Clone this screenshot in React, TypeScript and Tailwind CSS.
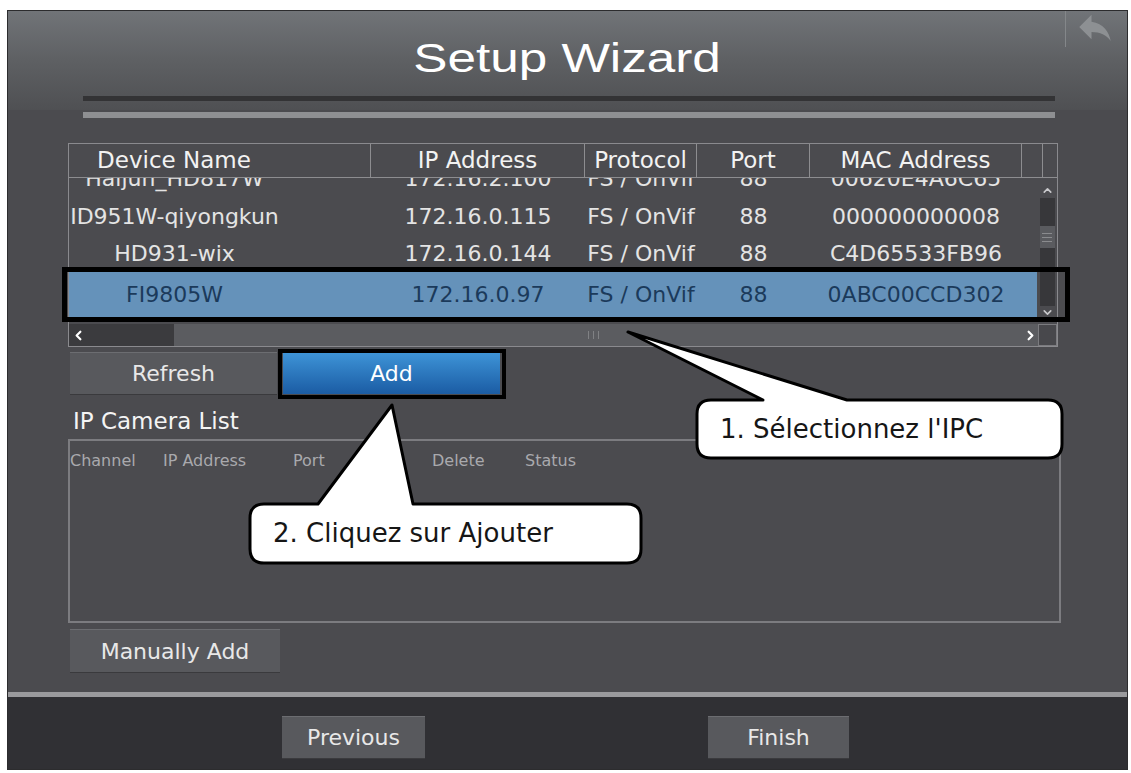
import { ChevronDown, ChevronLeft, ChevronRight, ChevronUp } from "lucide-react";

const devices = [
  ["Haijun_HD817W", "172.16.2.100", "FS / OnVif", "88", "00620E4A6C65"],
  ["ID951W-qiyongkun", "172.16.0.115", "FS / OnVif", "88", "000000000008"],
  ["HD931-wix", "172.16.0.144", "FS / OnVif", "88", "C4D65533FB96"],
  ["FI9805W", "172.16.0.97", "FS / OnVif", "88", "0ABC00CCD302"],
];

const rowHeights = ["h-[38px]", "h-[38px]", "h-[36px]", "h-[46px]"];

function GrayButton({ label, className }: { label: string; className: string }) {
  return (
    <div
      className={
        "flex items-center justify-center border-t border-[#6c6d71] bg-[#58595d] text-[22px] text-[#e8e8e8] shadow-[0_1px_0_#3a3a3d] " +
        className
      }
    >
      {label}
    </div>
  );
}

export default function App() {
  return (
    <div className="relative h-[773px] w-[1131px] overflow-hidden bg-white font-['DejaVu_Sans',Verdana,sans-serif]">
      {/* screen */}
      <div className="ml-[7px] mt-[10px] flex h-[760px] w-[1121px] flex-col border border-[#2c2c2e] bg-[#4b4b4f]">
        {/* header */}
        <div className="relative h-[99px] bg-linear-to-b from-[#717478] via-[#5e6063] to-[#4f5053]">
          <div className="h-[85px] pt-[27px] text-center">
            <span className="inline-block scale-x-[1.25] font-['Liberation_Sans',Arial,sans-serif] text-[41px] leading-[41px] text-white">
              Setup Wizard
            </span>
          </div>
          <div className="ml-[75px] mr-[72px] h-[5px] bg-[#333335]" />
          <div className="absolute left-[1057px] top-0 h-[36px] w-px bg-[#84878a]" />
          <svg className="absolute left-[1068px] top-[2px]" width="38" height="28" viewBox="2 4 20 16">
            <path d="M10 9V5l-7 7 7 7v-4.1c5 0 8.5 1.6 11 5.1-1-5-4-10-11-11z" fill="#8d9093" />
          </svg>
        </div>

        <div className="flex flex-1 flex-col">
          <div className="ml-[75px] mr-[72px] mt-[2px] h-[6px] bg-[#8e8f92]" />

          {/* device table */}
          <div className="ml-[60px] mt-[25px] w-[990px] border border-[#8a8a8e]">
            <div className="flex h-[34px] border-b border-[#8d8d90] text-[23px] text-[#f2f2f2]">
              <div className="flex w-[302px] items-center justify-center border-r border-[#8d8d90] pr-[91px] whitespace-nowrap">
                Device Name
              </div>
              <div className="flex w-[214px] items-center justify-center border-r border-[#8d8d90] whitespace-nowrap">
                IP Address
              </div>
              <div className="flex w-[112px] items-center justify-center border-r border-[#8d8d90] whitespace-nowrap">
                Protocol
              </div>
              <div className="flex w-[113px] items-center justify-center border-r border-[#8d8d90]">Port</div>
              <div className="flex w-[212px] items-center justify-center border-r border-[#8d8d90] whitespace-nowrap">
                MAC Address
              </div>
              <div className="w-[21px] border-r border-[#8d8d90]" />
              <div className="flex-1" />
            </div>

            <div className="flex h-[146px] overflow-hidden">
              <div className="-mt-[19px] w-[968px]">
                {devices.map((d, i) => {
                  const selected = i === devices.length - 1;
                  return (
                    <div
                      key={d[0]}
                      className={
                        "flex items-center whitespace-nowrap text-[22px] " +
                        rowHeights[i] +
                        (selected ? " bg-[#6592ba] text-[#1b3a5b]" : " text-[#e4e4e4]")
                      }
                    >
                      <div className="w-[302px] pr-[91px] text-center">{d[0]}</div>
                      <div className="w-[214px] text-center">{d[1]}</div>
                      <div className="w-[112px] text-center">{d[2]}</div>
                      <div className="w-[113px] text-center">{d[3]}</div>
                      <div className="w-[212px] text-center">{d[4]}</div>
                    </div>
                  );
                })}
              </div>
              <div className="flex w-[20px] flex-col items-center pt-[6px]">
                <ChevronUp size={13} strokeWidth={3} className="text-[#c9c9cc]" />
                <div className="mt-[1px] flex h-[108px] w-[15px] flex-col items-center bg-[#37373a]">
                  <div className="mt-[28px] flex h-[22px] w-[15px] flex-col items-center justify-center gap-[3px] bg-[#5a5b5f]">
                    <div className="h-px w-[10px] bg-[#8a8b8e]" />
                    <div className="h-px w-[10px] bg-[#8a8b8e]" />
                    <div className="h-px w-[10px] bg-[#8a8b8e]" />
                  </div>
                </div>
                <ChevronDown size={13} strokeWidth={3} className="text-[#c9c9cc]" />
              </div>
            </div>

            {/* horizontal scrollbar */}
            <div className="flex h-[22px]">
              <div className="flex w-[105px] items-center bg-[#3b3b3e] pl-[2px]">
                <ChevronLeft size={15} strokeWidth={3.5} className="text-white" />
              </div>
              <div className="flex flex-1 items-center bg-[#5b5c60]">
                <div className="ml-[414px] flex gap-[4px]">
                  <div className="h-[8px] w-px bg-[#808184]" />
                  <div className="h-[8px] w-px bg-[#808184]" />
                  <div className="h-[8px] w-px bg-[#808184]" />
                </div>
              </div>
              <div className="flex w-[16px] items-center justify-center bg-[#5b5c60]">
                <ChevronRight size={15} strokeWidth={3.5} className="text-white" />
              </div>
              <div className="w-[19px] border border-[#7b7b7f] bg-[#48484c]" />
            </div>
          </div>

          {/* action buttons */}
          <div className="ml-[62px] mt-[5px] flex">
            <GrayButton label="Refresh" className="h-[42px] w-[207px]" />
            <div className="ml-[6px] flex h-[42px] w-[217px] items-center justify-center bg-linear-to-b from-[#3f95d8] to-[#1b5ca4] text-[22px] text-white">
              Add
            </div>
          </div>

          <div className="ml-[65px] mt-[13px] h-[28px] text-[23px] leading-[28px] text-[#f4f4f4]">IP Camera List</div>

          {/* camera list */}
          <div className="ml-[60px] mt-[4px] h-[184px] w-[993px] border-2 border-[#7c7c80]">
            <div className="flex pt-[10px] text-[16px] leading-[20px] text-[#a9a9ad]">
              <span className="w-[93px]">Channel</span>
              <span className="w-[130px]">IP Address</span>
              <span className="w-[139px]">Port</span>
              <span className="w-[93px]">Delete</span>
              <span>Status</span>
            </div>
          </div>

          <GrayButton label="Manually Add" className="ml-[62px] mt-[6px] h-[43px] w-[210px]" />
        </div>

        {/* footer */}
        <div className="flex h-[77px] border-t-[5px] border-[#9a9a9d] bg-[#303034] pl-[274px] pt-[19px]">
          <GrayButton label="Previous" className="h-[42px] w-[143px]" />
          <GrayButton label="Finish" className="ml-[283px] h-[42px] w-[141px]" />
        </div>
      </div>

      {/* annotation overlays */}
      <div className="pointer-events-none absolute left-[62px] top-[267px] h-[55px] w-[1008px] border-[5px] border-black" />
      <div className="pointer-events-none absolute left-[278px] top-[349px] h-[50px] w-[228px] border-4 border-black" />

      <svg className="pointer-events-none absolute left-0 top-0" width="1131" height="773" viewBox="0 0 1131 773">
        <path
          d="M763 400 L628 332 L847 400 L1048 400 Q1062 400 1062 414 L1062 444 Q1062 458 1048 458 L711 458 Q697 458 697 444 L697 414 Q697 400 711 400 Z"
          fill="white"
          stroke="black"
          strokeWidth="3"
          strokeLinejoin="round"
        />
        <path
          d="M318 504 L392 405 L413 504 L627 504 Q641 504 641 518 L641 549 Q641 563 627 563 L264 563 Q250 563 250 549 L250 518 Q250 504 264 504 Z"
          fill="white"
          stroke="black"
          strokeWidth="3"
          strokeLinejoin="round"
        />
      </svg>
      <div className="absolute left-[697px] top-[400px] flex h-[58px] w-[365px] items-center pl-[23px] text-[26px] text-[#161616]">
        1. Sélectionnez l'IPC
      </div>
      <div className="absolute left-[250px] top-[504px] flex h-[59px] w-[391px] items-center pl-[23px] text-[26px] text-[#161616]">
        2. Cliquez sur Ajouter
      </div>
    </div>
  );
}
